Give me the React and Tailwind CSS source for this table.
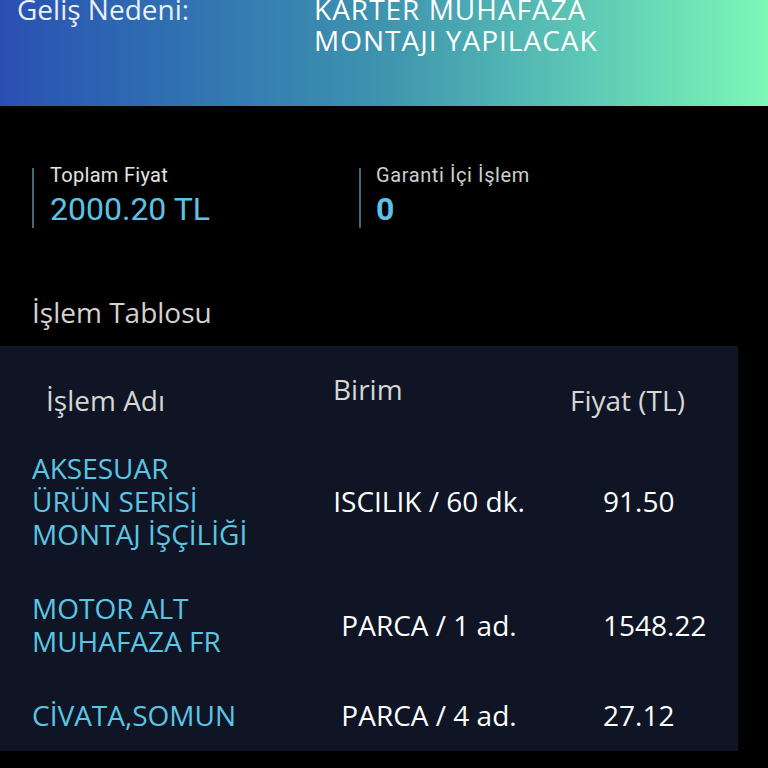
import React from 'react';

const rows = [
  { name: ['AKSESUAR', 'ÜRÜN SERİSİ', 'MONTAJ İŞÇİLİĞİ'], unit: 'ISCILIK / 60 dk.', price: '91.50' },
  { name: ['MOTOR ALT', 'MUHAFAZA FR'], unit: 'PARCA / 1 ad.', price: '1548.22' },
  { name: ['CİVATA,SOMUN'], unit: 'PARCA / 4 ad.', price: '27.12' },
];

const App = () => {
  return (
    <div className="w-[768px] h-[768px] bg-black overflow-hidden font-['Open_Sans',sans-serif]">
      {/* header band */}
      <div className="h-[106px] bg-gradient-to-r from-[#2a4fb3] via-[#3f94ae] to-[#7cf8b6] overflow-hidden">
        <div className="flex text-white text-[28px] leading-[31px] -mt-[6px]">
          <div className="w-[314px] pl-[17px] opacity-90">Geliş Nedeni:</div>
          <div className="tracking-[1px]">
            <div>KARTER MUHAFAZA</div>
            <div>MONTAJI YAPILACAK</div>
          </div>
        </div>
      </div>

      {/* stats */}
      <div className="flex mt-[57px] pl-[32px] font-['Roboto',sans-serif]">
        <div className="w-[327px] flex items-start">
          <div className="w-[2px] h-[60px] mt-[5px] bg-[#3d6b7b]" />
          <div className="pl-[16px]">
            <div className="text-[20px] leading-[24px] tracking-[0.3px] text-[#e4e4e4]">Toplam Fiyat</div>
            <div className="mt-[3px] text-[32px] leading-[38px] text-[#5ec2e6]">2000.20 TL</div>
          </div>
        </div>
        <div className="flex items-start">
          <div className="w-[2px] h-[60px] mt-[5px] bg-[#3d6b7b]" />
          <div className="pl-[15px]">
            <div className="text-[20px] leading-[24px] tracking-[0.6px] text-[#cfcfcf]">Garanti İçi İşlem</div>
            <div className="mt-[3px] text-[32px] leading-[38px] font-bold text-[#5ec2e6]">0</div>
          </div>
        </div>
      </div>

      <div className="pl-[32px] mt-[66px] text-[28px] leading-[36px] text-[#d2d2d2]">İşlem Tablosu</div>

      {/* table panel */}
      <div className="w-[738px] mt-[16px] bg-[#0f1524] pt-[25px] pb-[19px] pl-[32px]">
        <div className="grid grid-cols-[282px_256px_1fr] items-start text-[28px] leading-[36px] text-[#d6d6d6]">
          <div className="pl-[14px] pt-[11px]">İşlem Adı</div>
          <div className="pl-[19px]">Birim</div>
          <div className="pt-[11px]">Fiyat (TL)</div>
        </div>
        <div className="flex flex-col gap-[41px] mt-[34px]">
          {rows.map((r) => (
            <div key={r.price} className="grid grid-cols-[282px_230px_1fr] items-center text-[28px] leading-[33px]">
              <div className="text-[#5cc5e3]">
                {r.name.map((l) => (
                  <div key={l}>{l}</div>
                ))}
              </div>
              <div className="text-center text-white">{r.unit}</div>
              <div className="pl-[59px] text-white">{r.price}</div>
            </div>
          ))}
        </div>
      </div>
    </div>
  );
};

export default App;
